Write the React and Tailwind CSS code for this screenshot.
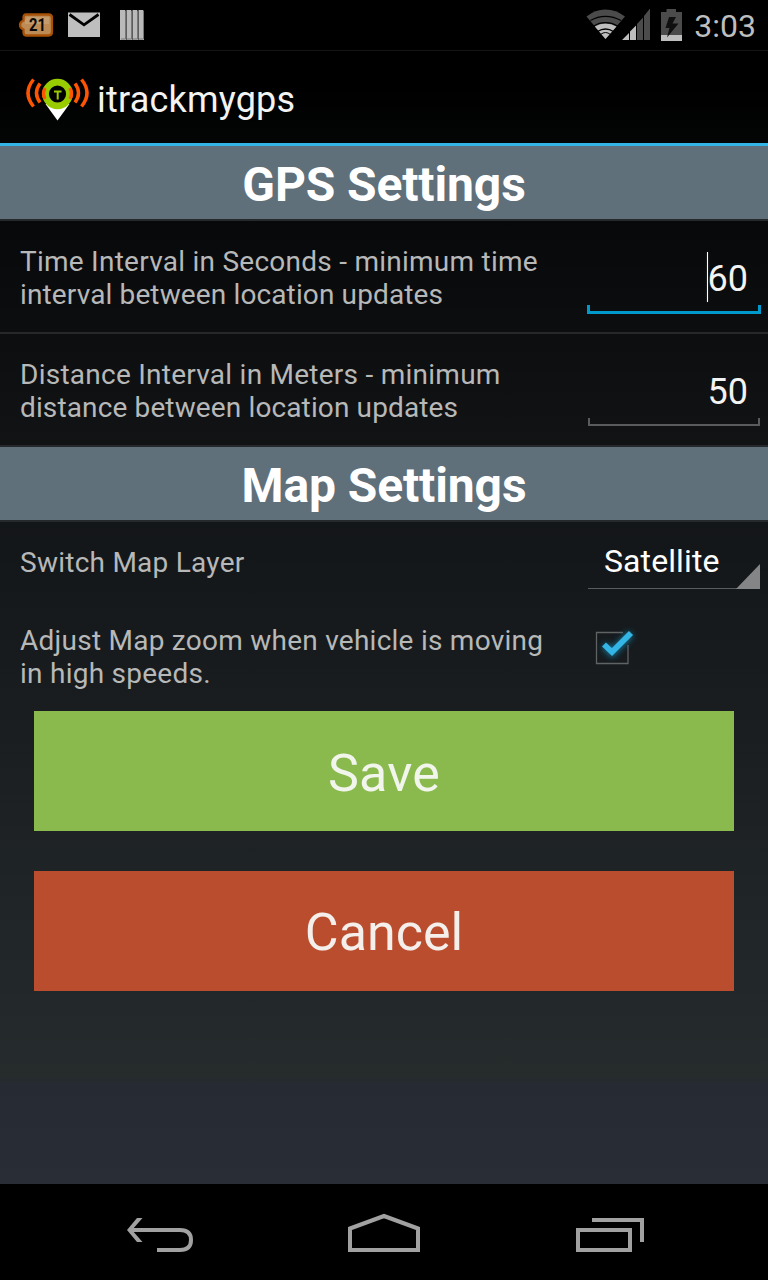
function StatusBar() {
  return (
    <header className="flex h-[51px] shrink-0 items-center justify-between border-b border-[#141414] bg-black">
      <div className="flex items-center">
        <svg className="ml-[18px] h-[28px] w-[36px]" viewBox="18 11 36 28">
          <path d="M26 14.5H48.500Q52 14.500 52 18V32Q52 35.500 48.500 35.500H26Q23.500 35.500 23.500 32V29.500Q20 28 20 25Q20 22 23.500 20.500V18Q23.500 14.500 26 14.500Z" fill="#bd8b55" stroke="#a85207" strokeWidth="2.300" />
          <path d="M27 17H49V24H25V20Z" fill="#c9a67c" opacity="0.6" />
          <text x="37.500" y="31" textAnchor="middle" textLength="17" lengthAdjust="spacingAndGlyphs" className="font-['Roboto',sans-serif] text-[17.500px] font-bold" fill="#080808">21</text>
        </svg>
        <svg className="ml-[14px] h-[26px] w-[32px]" viewBox="68 12 32 26">
          <path d="M68 12.500H100V37H68Z" fill="#bebebe" />
          <path d="M69.500 14.500L84 24.800L98.500 14.500" fill="none" stroke="#000" strokeWidth="2.800" />
        </svg>
        <svg className="ml-[20px] h-[30px] w-[24px]" viewBox="0 0 24 30">
          <path d="M0 0H5L6 1.500V30H0ZM6.500 0H11L12 1.500V30H6.500ZM12.500 0H17L18 1.500V30H12.500ZM18.500 0H23L24 1.500V30H18.500Z" fill="#b9b9b9" />
          <path d="M5.500 1V29H1M11.500 1V29H7M17.500 1V29H13M23.500 1V29H19" fill="none" stroke="#777" />
        </svg>
      </div>
      <div className="flex items-center pr-[12px]">
        <svg className="h-[34px] w-[66px]" viewBox="586 8 66 34">
          <path d="M605.500 39L586.500 16.500Q595 9.500 605.500 9.500T625 16.500Z" fill="#4b4b4b" />
          <path d="M605.500 39L594.800 26.500Q600 23.500 605.500 23.500T616.500 26.500Z" fill="#bebebe" />
          <path d="M590.500 20.500Q597.500 16.300 605.500 16.300T621 20.500M594 26Q599 22.700 605.500 22.700T617.500 26" fill="none" stroke="#000" strokeWidth="1.200" />
          <path d="M597.500 31.500Q605.500 26.500 613.500 31.500" fill="none" stroke="#000" strokeWidth="1.300" />
          <path d="M600.500 34.500Q605.500 30.500 610.500 34.500" fill="none" stroke="#000" strokeWidth="1" />
          <path d="M622 40L629 33V40ZM630 40V31.500L636 25.500V40Z" fill="#bebebe" />
          <path d="M637 40V24L643 17.500V40ZM644 40V16L650 8.500V40Z" fill="#4b4b4b" />
        </svg>
        <svg className="ml-[9px] h-[34px] w-[21px]" viewBox="661 7 21 34">
          <path d="M666.500 8H676V11H682V40H661V11H666.500Z" fill="#4b4b4b" />
          <path d="M661 34H682V40H661Z" fill="#bebebe" />
          <path d="M669 16H676L672.500 22.500H678.500L667 36.500L669.500 27H665.500Z" fill="#101010" />
        </svg>
        <span className="ml-[12px] pt-[2px] text-[32px] leading-[50px] text-[#bebebe]">3:03</span>
      </div>
    </header>
  );
}

function Logo() {
  return (
    <svg className="h-[44px] w-[64px]" viewBox="26 77 64 44">
      <path d="M45.500 104L57.500 120.500L69.500 104Z" fill="#fff" />
      <circle cx="57.500" cy="94" r="11.900" fill="#000" stroke="#99cc00" strokeWidth="6.600" />
      <path d="M54 91.500H61.500M57.700 91V99.500" stroke="#99cc00" strokeWidth="2" fill="none" />
      <g fill="none" stroke="#ff5500" strokeWidth="3.500">
        <path d="M33.500 79.500Q22.500 93 33.500 106.500M40 83.500Q33 93 40 102.500M45 88Q42 93.500 45 99" />
        <path d="M81.500 79.500Q92.500 93 81.500 106.500M75 83.500Q82 93 75 102.500M70 88Q73 93.500 70 99" />
      </g>
    </svg>
  );
}

function SectionTitle({ children }) {
  return (
    <h2 className="h-[75px] shrink-0 border-b-2 border-[#26292b] bg-[#60707a] pt-[2px] text-center text-[48px] leading-[74px] font-bold tracking-[-0.12px] text-white">
      {children}
    </h2>
  );
}

function SettingText({ children }) {
  return <p className="text-[28px] leading-[33px] tracking-[0.25px] text-[#b7b8b8]">{children}</p>;
}

export default function App() {
  return (
    <div className="flex h-[1280px] w-[768px] flex-col overflow-hidden bg-black font-['Roboto',sans-serif] whitespace-nowrap">
      <StatusBar />
      <div className="flex min-h-0 flex-1 flex-col bg-[linear-gradient(#010202_0px,#08090b_180px,#101113_350px,#14171a_500px,#181c1f_630px,#1d2124_760px,#22282a_930px,#262b2c_1026px,#262a32_1032px,#292d36_1133px)]">
        <div className="flex h-[95px] shrink-0 items-center border-b-3 border-[#33b5e5] bg-linear-to-b from-black to-[#040606] pl-[26px]">
          <div className="pt-[3px]"><Logo /></div>
          <h1 className="ml-[7px] pt-[5px] text-[36px] leading-[42px] tracking-[0.2px] text-[#f3f3f3]">itrackmygps</h1>
        </div>

        <SectionTitle>GPS Settings</SectionTitle>
        <div className="flex h-[113px] shrink-0 justify-between border-b-2 border-[#26292b] pr-[7px] pl-[20px]">
          <div className="pt-[24px]">
            <SettingText>Time Interval in Seconds - minimum time<br /><span className="tracking-[0.13px]">interval between location updates</span></SettingText>
          </div>
          <div className="flex w-[174px] flex-col pt-[31px]">
            <div className="flex h-[50px] items-center justify-end pr-[13px]">
              <span className="h-[50px] w-px bg-white shadow-[0_0_2px_#555]" />
              <span className="pt-[3px] text-[36px] leading-[42px] text-[#f3f3f3]">60</span>
            </div>
            <div className="mt-[3px] h-[9px] border-x-3 border-b-3 border-[#0099cc]" />
          </div>
        </div>
        <div className="flex h-[113px] shrink-0 justify-between border-b-2 border-[#26292b] pr-[8px] pl-[20px]">
          <div className="pt-[24px]">
            <SettingText>Distance Interval in Meters - minimum<br /><span className="tracking-[0.13px]">distance between location updates</span></SettingText>
          </div>
          <div className="flex w-[172px] flex-col pt-[31px]">
            <div className="flex h-[50px] items-center justify-end pr-[12px]">
              <span className="pt-[3px] text-[36px] leading-[42px] text-[#f3f3f3]">50</span>
            </div>
            <div className="mt-[3px] h-[8px] border-x-2 border-b-2 border-[#5a5b5d]" />
          </div>
        </div>

        <SectionTitle>Map Settings</SectionTitle>
        <div className="flex h-[82px] shrink-0 justify-between pr-[8px] pl-[20px]">
          <div className="pt-[24px]">
            <SettingText>Switch Map Layer</SettingText>
          </div>
          <div className="relative mt-[16px] h-[51px] w-[172px] border-b border-[#5a5b5d] pl-[16px]">
            <span className="text-[32px] leading-[46px] tracking-[0.1px] text-white">Satellite</span>
            <svg className="absolute right-0 -bottom-px h-[25px] w-[24px]" viewBox="0 0 24 25">
              <path d="M24 0V25H0Z" fill="#848586" />
            </svg>
          </div>
        </div>
        <div className="flex h-[107px] shrink-0 justify-between pr-[128px] pl-[20px]">
          <div className="pt-[20px]">
            <SettingText>Adjust Map zoom when vehicle is moving<br />in high speeds.</SettingText>
          </div>
          <svg className="mt-[16px] h-[52px] w-[52px]" viewBox="588 620 52 52">
            <defs>
              <filter id="glow" x="-50%" y="-50%" width="200%" height="200%">
                <feGaussianBlur stdDeviation="3" />
              </filter>
            </defs>
            <path d="M623 632.500H596.500V663.500H628V645" fill="none" stroke="#606364" strokeWidth="1.300" />
            <path d="M604 645L612 653L631 633.500" fill="none" stroke="#1688b0" strokeWidth="7" opacity="0.800" filter="url(#glow)" />
            <path d="M604 644.500L612 652L631 633" fill="none" stroke="#33b5e5" strokeWidth="5.800" />
          </svg>
        </div>

        <div className="flex flex-col gap-[40px] px-[34px]">
          <button className="h-[120px] bg-[#8ab94d] pt-[5px] text-[52px] tracking-[0.2px] text-[#f2f5ec]">Save</button>
          <button className="h-[120px] bg-[#b94d2e] pt-[4px] text-[52px] text-[#f5efec]">Cancel</button>
        </div>
      </div>
      <nav className="h-[96px] shrink-0 bg-black">
        <svg className="h-[96px] w-[768px]" viewBox="0 1184 768 96" fill="none" stroke="#a1a1a1" strokeWidth="4">
          <path d="M130 1230H180Q191 1230 191 1240T180 1250H157" />
          <path d="M127 1230L137 1218H142.500L132 1230L142.500 1242H137Z" fill="#a1a1a1" stroke="none" />
          <path d="M350 1250V1228.500L384 1216L418 1228.500V1250Z" />
          <path d="M578 1230H630V1250H578ZM592 1220H642V1242" />
        </svg>
      </nav>
    </div>
  );
}
